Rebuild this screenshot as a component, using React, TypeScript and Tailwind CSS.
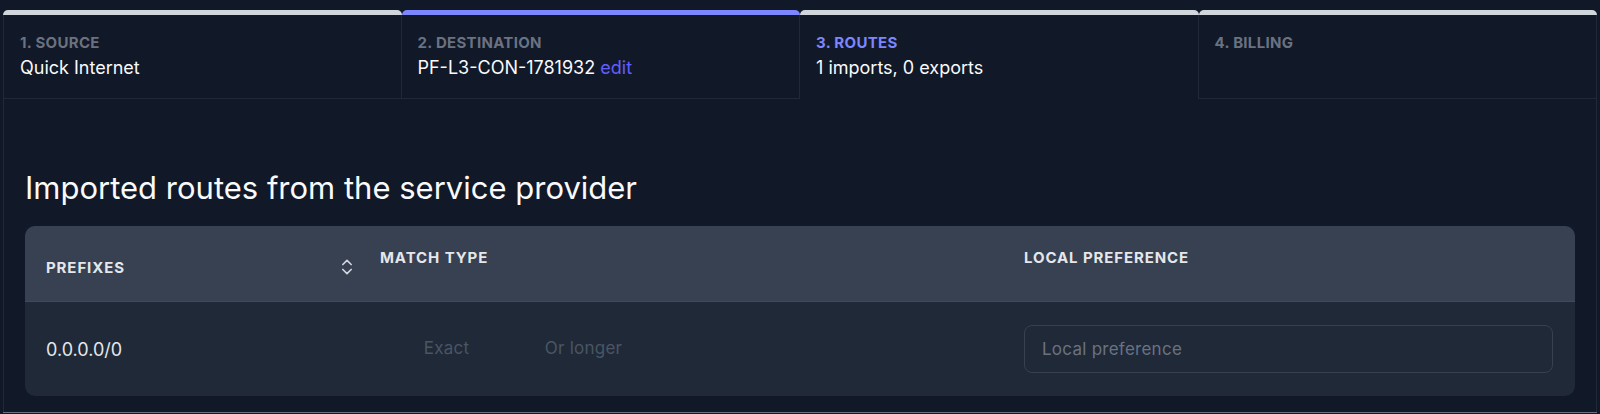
import React from 'react';
import { ChevronsUpDown } from 'lucide-react';

type Step = {
    label: string;
    value?: string;
    link?: string;
    barClass: string;
    labelClass: string;
    active?: boolean;
    boxClass: string;
};

const steps: Step[] = [
    { label: '1. Source', value: 'Quick Internet', barClass: 'bg-gray-300', labelClass: 'text-gray-500', boxClass: 'border-l border-r border-b' },
    { label: '2. Destination', value: 'PF-L3-CON-1781932', link: 'edit', barClass: 'bg-indigo-400', labelClass: 'text-gray-500', boxClass: 'border-r border-b' },
    { label: '3. Routes', value: '1 imports, 0 exports', barClass: 'bg-gray-300', labelClass: 'text-indigo-400', active: true, boxClass: 'border-r' },
    { label: '4. Billing', barClass: 'bg-gray-300', labelClass: 'text-gray-500', boxClass: 'border-r border-b' },
];

const StepTab: React.FC<{ step: Step }> = ({ step }) => (
    <div className="flex flex-col">
        <div className={`h-[5px] rounded-t-[5px] ${step.barClass}`} />
        <div className={`h-[84px] pl-4 pt-[18px] border-[#1f2937] ${step.boxClass}`}>
            <p className={`text-[15px] leading-5 font-bold uppercase tracking-[0.02em] ${step.labelClass}`}>{step.label}</p>
            <p className="mt-[3px] text-[18px] leading-6 text-gray-50">
                {step.value}
                {step.link && <span className="text-indigo-500"> {step.link}</span>}
            </p>
        </div>
    </div>
);

export default function App() {
    return (
        <div className="min-h-[414px] bg-[#111827] pt-[10px] font-['Inter',sans-serif]">
            <div className="mx-[3px]">
                <div className="grid grid-cols-4">
                    {steps.map(s => <StepTab key={s.label} step={s} />)}
                </div>
                <div className="border-x border-[#1f2937] px-[21px] pt-[71px] pb-[16px]">
                    <h2 className="text-[31px] leading-9 text-gray-50 mb-5">Imported routes from the service provider</h2>
                    <div className="rounded-[10px] overflow-hidden bg-[#1f2937]">
                        <div className="grid grid-cols-[335px_644px_1fr] h-[76px] bg-[#374151] border-b border-[#404a5a] text-[15px] leading-5 font-bold uppercase tracking-[0.06em] text-gray-200">
                            <div className="flex items-start justify-between pl-[21px] pr-[3px] pt-[32px]">
                                <span>Prefixes</span>
                                <ChevronsUpDown className="w-5 h-5 -mt-[1px] text-gray-300" strokeWidth={2} />
                            </div>
                            <div className="pl-5 pt-[22px]">Match type</div>
                            <div className="pl-5 pt-[22px]">Local preference</div>
                        </div>
                        <div className="grid grid-cols-[335px_644px_1fr] h-[94px] items-center text-[17px] tracking-[0.015em]">
                            <div className="pl-[21px] text-[18px] tracking-normal text-gray-200">0.0.0.0/0</div>
                            <div className="flex pl-[18px] text-gray-600">
                                <button className="w-[137px] text-center py-2">Exact</button>
                                <button className="w-[137px] text-center py-2">Or longer</button>
                            </div>
                            <div className="pl-5 pr-[22px]">
                                <input
                                    type="text"
                                    placeholder="Local preference"
                                    className="w-full h-12 px-[17px] rounded-lg border border-[#374151] bg-transparent text-gray-200 placeholder:text-gray-500 outline-none"
                                />
                            </div>
                        </div>
                    </div>
                </div>
                <div className="h-px bg-gray-500" />
            </div>
        </div>
    );
}
